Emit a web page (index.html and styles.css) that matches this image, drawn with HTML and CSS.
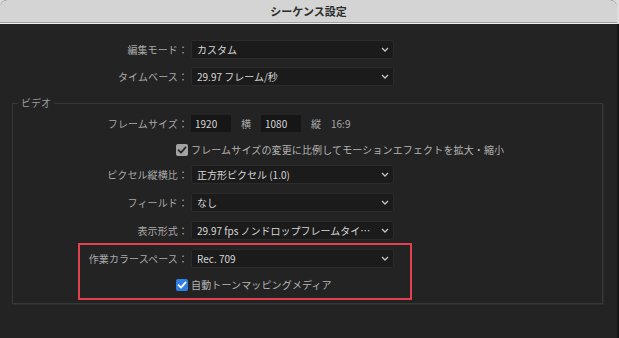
FILE: index.html
```html
<!DOCTYPE html>
<html lang="ja">
<head>
    <meta charset="UTF-8">
    <meta name="viewport" content="width=device-width, initial-scale=1.0">
    <title>シーケンス設定</title>
    <link rel="stylesheet" href="styles.css">
</head>
<body>

<div class="window">
    <div class="titlebar">シーケンス設定</div>

    <div class="rows top-rows">
        <div class="row">
            <span class="label">編集モード：</span>
            <div class="select">
                <span class="value">カスタム</span>
                <svg class="chev" width="8" height="5" viewBox="0 0 8 5"><polyline points="1,1 4,4 7,1"/></svg>
            </div>
        </div>
        <div class="row">
            <span class="label">タイムベース：</span>
            <div class="select">
                <span class="value">29.97 フレーム/秒</span>
                <svg class="chev" width="8" height="5" viewBox="0 0 8 5"><polyline points="1,1 4,4 7,1"/></svg>
            </div>
        </div>
    </div>

    <fieldset class="group">
        <legend>ビデオ</legend>

        <div class="rows">
            <div class="row">
                <span class="label">フレームサイズ：</span>
                <div class="size-fields">
                    <span class="num-input">1920</span>
                    <span class="unit">横</span>
                    <span class="num-input">1080</span>
                    <span class="unit">縦</span>
                    <span class="unit">16:9</span>
                </div>
            </div>

            <div class="row check-row">
                <span class="check grey">
                    <svg width="12" height="12" viewBox="0 0 12 12"><polyline points="2.5,6.2 5,8.6 9.6,3.4"/></svg>
                </span>
                <span class="check-text">フレームサイズの変更に比例してモーションエフェクトを拡大・縮小</span>
            </div>

            <div class="row">
                <span class="label">ピクセル縦横比：</span>
                <div class="select">
                    <span class="value">正方形ピクセル (1.0)</span>
                    <svg class="chev" width="8" height="5" viewBox="0 0 8 5"><polyline points="1,1 4,4 7,1"/></svg>
                </div>
            </div>

            <div class="row">
                <span class="label">フィールド：</span>
                <div class="select">
                    <span class="value">なし</span>
                    <svg class="chev" width="8" height="5" viewBox="0 0 8 5"><polyline points="1,1 4,4 7,1"/></svg>
                </div>
            </div>

            <div class="row">
                <span class="label">表示形式：</span>
                <div class="select">
                    <span class="value">29.97 fps ノンドロップフレームタイ…</span>
                    <svg class="chev" width="8" height="5" viewBox="0 0 8 5"><polyline points="1,1 4,4 7,1"/></svg>
                </div>
            </div>

            <div class="highlight">
                <div class="row">
                    <span class="label">作業カラースペース：</span>
                    <div class="select">
                        <span class="value">Rec. 709</span>
                        <svg class="chev" width="8" height="5" viewBox="0 0 8 5"><polyline points="1,1 4,4 7,1"/></svg>
                    </div>
                </div>
                <div class="row check-row">
                    <span class="check blue">
                        <svg width="12" height="12" viewBox="0 0 12 12"><polyline points="2.5,6.2 5,8.6 9.6,3.4"/></svg>
                    </span>
                    <span class="check-text">自動トーンマッピングメディア</span>
                </div>
            </div>
        </div>
    </fieldset>
</div>

</body>
</html>
```

FILE: styles.css
```css
html, body {
    margin: 0;
    height: 100%;
}

body {
    font-family: "Noto Sans CJK JP", "Noto Sans", sans-serif;
    font-size: 10px;
    color: #a9a9a9;
    background: linear-gradient(#dcdcdc 0, #dcdcdc 24px, #161616 24px);
}

.window {
    width: 617px;
    height: 100%;
    background: #232323;
    border-radius: 7px 7px 0 0;
    overflow: hidden;
}

.titlebar {
    height: 22px;
    line-height: 22px;
    background: #d4d4d4;
    color: #2c2c2c;
    font-size: 11px;
    font-weight: 700;
    text-align: center;
    border-bottom: 1px solid #9c9c9c;
    box-shadow: 0 1px 0 #efefef;
    margin-bottom: 1px;
}

.rows {
    display: flex;
    flex-direction: column;
    gap: 9px;
}

.top-rows {
    padding-top: 16px;
    gap: 8px;
}

.row {
    display: grid;
    grid-template-columns: 188px 203px;
    column-gap: 3px;
    align-items: center;
    height: 19px;
}

.label {
    text-align: right;
    white-space: nowrap;
    letter-spacing: 0.1px;
}

.select {
    display: flex;
    align-items: center;
    height: 19px;
    box-sizing: border-box;
    background: #1b1b1b;
    border: 1px solid #2b2b2b;
    border-radius: 2px;
    color: #d6d6d6;
}

.select .value {
    flex: 1;
    min-width: 0;
    padding-left: 5px;
    white-space: nowrap;
}

.chev {
    flex: none;
    margin: 0 4px 0 6px;
}

.chev polyline {
    fill: none;
    stroke: #c4c4c4;
    stroke-width: 1.3;
}

.group {
    margin: 11px 14px 0 12px;
    padding: 0 0 3px 0;
    border: 1px solid #383838;
    box-shadow: 1px 1px 0 #2c2c2c;
    min-width: 0;
}

.group legend {
    margin-left: 5px;
    padding: 0 3px;
    font-size: 10px;
    line-height: 12px;
    color: #9c9c9c;
}

.group > .rows {
    padding-top: 5px;
}

.group .row {
    grid-template-columns: 175px 203px;
}

.size-fields {
    display: flex;
    align-items: center;
    gap: 10px;
    white-space: nowrap;
}

.num-input {
    width: 40px;
    height: 17px;
    line-height: 18px;
    box-sizing: border-box;
    padding-left: 4px;
    background: #161616;
    color: #d6d6d6;
    font-size: 10px;
}

.unit {
    color: #a9a9a9;
}

.check-row {
    height: 14px;
}

.check {
    justify-self: end;
    width: 12px;
    height: 12px;
    border-radius: 2px;
    display: block;
}

.check svg {
    display: block;
}

.check polyline {
    fill: none;
    stroke-width: 1.8;
    stroke-linecap: round;
    stroke-linejoin: round;
}

.check.grey {
    background: #a3a3a3;
}

.check.grey polyline {
    stroke: #2a2a2a;
}

.check.blue {
    background: #2d7fe3;
}

.check.blue polyline {
    stroke: #ffffff;
}

.check-text {
    white-space: nowrap;
    color: #b4b4b4;
    letter-spacing: 0.14px;
}

.highlight {
    display: flex;
    flex-direction: column;
    gap: 9px;
    margin: -6px 0 0 65px;
    width: 334px;
    box-sizing: border-box;
    border: 2px solid #e3414f;
    padding: 4px 0 7px 0;
}

.highlight .row {
    grid-template-columns: 108px 203px;
}
```
